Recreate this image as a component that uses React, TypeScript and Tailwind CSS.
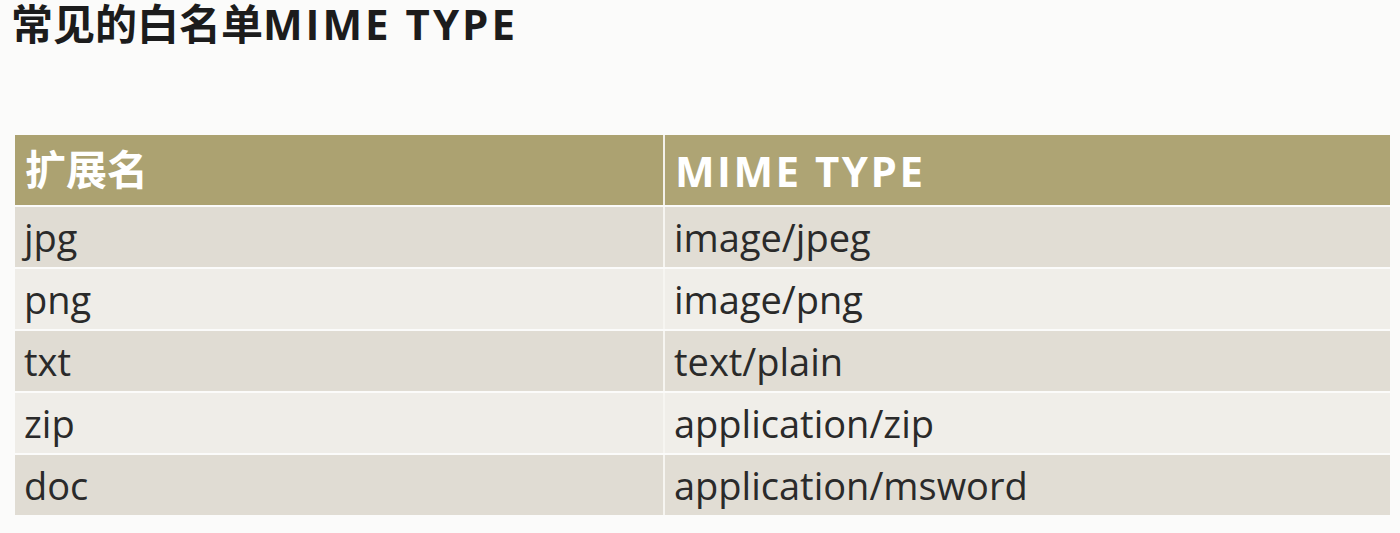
import React from "react";

const rows: [string, string][] = [
  ["jpg", "image/jpeg"],
  ["png", "image/png"],
  ["txt", "text/plain"],
  ["zip", "application/zip"],
  ["doc", "application/msword"],
];

export default function App() {
  return (
    <div
      className="w-[1400px] h-[533px] bg-[#fbfbfa] overflow-hidden"
      style={{ fontFamily: '"Open Sans", "Noto Sans CJK SC", sans-serif' }}
    >
      <h1 className="pl-[11px] text-[42px] leading-[48px] font-bold text-[#1c1c1c]">
        常见的白名单<span className="tracking-[3px]">MIME TYPE</span>
      </h1>
      <div className="mt-[87px] ml-[15px] w-[1375px] flex flex-col gap-[2px]">
        <div className="grid grid-cols-[648px_1fr] gap-[2px] h-[70px] bg-[#f3f1ea]">
          <div className="bg-[#aca271] flex items-center pl-[10px] text-[41px] font-bold text-white">
            扩展名
          </div>
          <div className="bg-[#aea474] flex items-center pl-[10px] text-[42px] font-bold text-white tracking-[2.5px]">
            MIME TYPE
          </div>
        </div>
        {rows.map(([ext, mime], i) => (
          <div
            key={ext}
            className="grid grid-cols-[648px_1fr] gap-[2px] h-[60px] bg-[#f6f5f1]"
          >
            <div
              className={`${i % 2 === 0 ? "bg-[#e0dcd3]" : "bg-[#efede8]"} flex items-center pl-[9px] text-[38px] text-[#2a2a2a]`}
            >
              {ext}
            </div>
            <div
              className={`${i % 2 === 0 ? "bg-[#e1ddd4]" : "bg-[#f0eee9]"} flex items-center pl-[9px] text-[38px] text-[#2a2a2a]`}
            >
              {mime}
            </div>
          </div>
        ))}
      </div>
    </div>
  );
}
